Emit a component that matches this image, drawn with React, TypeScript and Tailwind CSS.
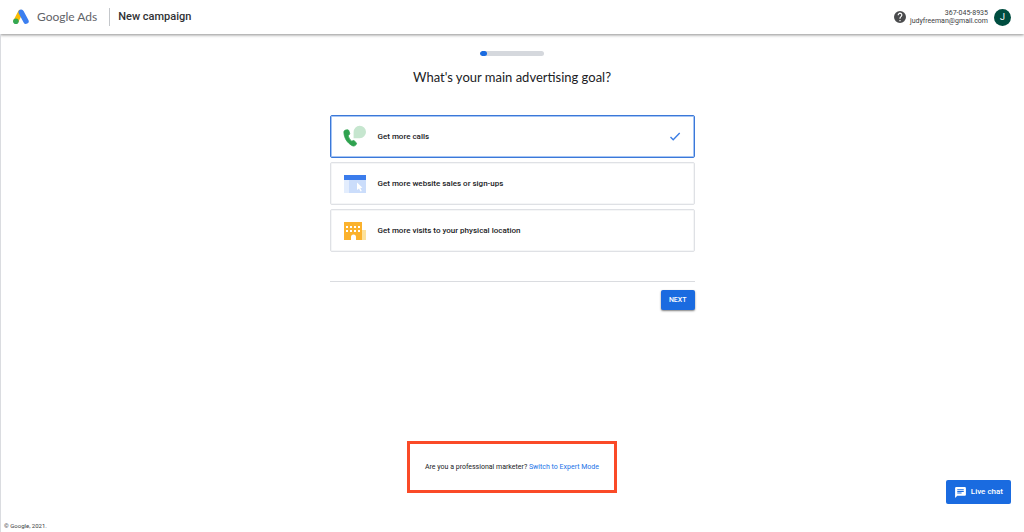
import { useState } from 'react';

const goals = [
  { id: 'calls', label: 'Get more calls', Icon: CallsIcon },
  { id: 'website', label: 'Get more website sales or sign-ups', Icon: WebsiteIcon },
  { id: 'visits', label: 'Get more visits to your physical location', Icon: StoreIcon },
];

function AdsLogo() {
  return (
    <svg className="h-4 w-4" viewBox="0 0 16 16" aria-hidden="true">
      <path d="M7.4 3.4 3 12" stroke="#fbbc04" strokeWidth="5" strokeLinecap="round" />
      <path d="M8.2 3.2 13 12.2" stroke="#3c7ff0" strokeWidth="5.4" strokeLinecap="round" />
      <circle cx="2.9" cy="12.3" r="2.8" fill="#34a853" />
    </svg>
  );
}

function CallsIcon() {
  return (
    <svg className="h-6 w-6" viewBox="0 0 24 24" aria-hidden="true">
      <path d="M10.6 13.2V7.200A6.200 6.200 0 1 1 16.800 13.200Z" fill="#c6e6cf" />
      <path
        d="M2.6 5.1 4.5 4.8c.6-.1 1.1.3 1.3.8l.9 2.7c.2.5 0 1-.4 1.3L5 10.7c.9 2.3 2 4.2 3.7 5.6l1.5-.7c.5-.2 1-.1 1.3.3l1.8 2.1c.4.5.3 1.1-.1 1.5l-1.200 1.100c-.6.5-1.400.6-2.200.3C4.400 18.400 1.100 13.200.9 7.200c0-1.100.6-1.900 1.700-2.100Z"
        fill="#2fa24f"
        stroke="#2fa24f"
        strokeWidth="0.8"
      />
    </svg>
  );
}

function WebsiteIcon() {
  return (
    <svg className="h-6 w-6" viewBox="0 0 24 24" aria-hidden="true">
      <path d="M1 3h22v18H1z" fill="#cbddfb" />
      <path d="M1 8h5v13H1z" fill="#e3edfd" />
      <path d="M1 3h22v5H1z" fill="#3b7cec" />
      <path d="m14 10.5 5.5 5.2-2.2.2 1.5 3-1.3.7-1.5-3.1-2 1.5z" fill="#fff" />
    </svg>
  );
}

function StoreIcon() {
  return (
    <svg className="h-6 w-6" viewBox="0 0 24 24" aria-hidden="true">
      <path d="M18 11h5v10h-5z" fill="#fde29b" />
      <path d="M1 3h18v18h-6v-3a2 2 0 0 0-5 0v3H1z" fill="#fbb22d" />
      <path
        d="M3 7h2v2H3zM7 7h2v2H7zM11 7h2v2h-2zM15 7h2v2h-2zM3 11h2v2H3zM7 11h2v2H7zM11 11h2v2h-2zM15 11h2v2h-2z"
        fill="#fff"
      />
    </svg>
  );
}

function Header() {
  return (
    <header className="flex h-[34px] items-center bg-white pr-[13px] pl-[13px] shadow-[0_1px_3px_rgba(0,0,0,0.45)]">
      <a href="#" className="flex items-center gap-2 font-['Lato',sans-serif] text-[12px] leading-4 text-[#5f6368]">
        <AdsLogo />
        <span>Google Ads</span>
      </a>
      <h1 className="ml-3 border-l border-[#c4c7cb] pl-2 text-[11px] leading-[18px] font-medium text-[#303134]">New campaign</h1>
      <button type="button" aria-label="Help" className="ml-auto">
        <svg className="h-3 w-3" viewBox="2 2 20 20" aria-hidden="true">
          <path
            d="M12 2a10 10 0 1 0 0 20 10 10 0 0 0 0-20Zm1 17h-2v-2h2v2Zm2.07-7.75-.9.92C13.45 12.9 13 13.5 13 15h-2v-.5c0-1.1.45-2.1 1.17-2.83l1.24-1.26A2 2 0 1 0 10 9H8a4 4 0 1 1 7.07 2.25Z"
            fill="#4a4b4d"
          />
        </svg>
      </button>
      <div className="ml-1 text-right text-[7px] leading-[8px] text-[#3c4043]">
        <div>367-045-8935</div>
        <div>judyfreeman@gmail.com</div>
      </div>
      <button type="button" aria-label="Account" className="ml-1.5 flex h-[17px] w-[17px] items-center justify-center rounded-full bg-[#004d40] text-[9px] leading-[17px] text-white">
        J
      </button>
    </header>
  );
}

export default function App() {
  const [goal, setGoal] = useState('calls');

  return (
    <div className="flex min-h-screen flex-col bg-white font-['Roboto',sans-serif] text-[#202124]">
      <Header />

      <main className="flex flex-1 flex-col items-center px-4 pt-[17px] shadow-[inset_1px_0_0_#dadce0]">
        <div role="progressbar" aria-label="Setup progress" aria-valuenow={10} className="h-[5px] w-16 overflow-hidden rounded-full bg-[#d5d8dd]">
          <div className="h-full w-[7px] rounded-full bg-[#1a6be0]" />
        </div>
        <h2 id="goal-title" className="mt-[11px] font-['Lato',sans-serif] text-[13px] leading-5">What's your main advertising goal?</h2>

        <form className="mt-7 w-full max-w-[365px]" onSubmit={(e) => e.preventDefault()}>
          <div role="radiogroup" aria-labelledby="goal-title" className="flex flex-col gap-1">
            {goals.map(({ id, label, Icon }) => (
              <label
                key={id}
                className="flex h-[43px] cursor-pointer items-center rounded-xs border border-[#dfe1e5] px-3 text-[8px] leading-3 font-medium shadow-[inset_0_0_0_1px_#f5f6f7] has-checked:border-[#3b78d8] has-checked:shadow-[inset_0_0_0_1px_#a5c5f5]"
              >
                <input type="radio" name="goal" value={id} checked={goal === id} onChange={() => setGoal(id)} className="peer w-0 appearance-none" />
                <Icon />
                <span className="ml-[11px] flex-1">{label}</span>
                <svg className="mr-px hidden h-3 w-3 peer-checked:block" viewBox="0 0 12 12" fill="none" aria-hidden="true">
                  <path d="m1.5 6 2.7 2.7 6.5-6.7" stroke="#3b7de4" strokeWidth="1.4" />
                </svg>
              </label>
            ))}
          </div>

          <div className="mt-[29px] flex justify-end border-t border-[#dadce0] pt-2">
            <button type="submit" className="h-5 rounded-xs bg-[#1a6be0] px-2 text-[7px] font-medium text-white shadow-[0_1px_2px_rgba(0,0,0,0.5)]">
              NEXT
            </button>
          </div>
        </form>

        <p className="mt-auto border-[3px] border-[#fa4a27] px-[15px] py-[17px] text-[7px] leading-3">
          Are you a professional marketer? <a href="#" className="text-[#1a73e8]">Switch to Expert Mode</a>
        </p>
      </main>

      <footer className="px-1 pt-7 pb-px text-[6px] leading-[10px] text-[#3c4043] shadow-[inset_1px_0_0_#dadce0]">© Google, 2021.</footer>

      <button type="button" className="fixed right-[13px] bottom-7 flex h-6 items-center gap-1 rounded-xs bg-[#1a6be0] px-2 text-[8px] font-medium text-white">
        <svg className="h-[13px] w-[13px]" viewBox="0 0 24 24" aria-hidden="true">
          <path d="M20 2H4a2 2 0 0 0-2 2v18l4-4h14a2 2 0 0 0 2-2V4a2 2 0 0 0-2-2ZM6 9h12v2H6V9Zm8 5H6v-2h8v2Zm4-6H6V6h12v2Z" fill="#fff" />
        </svg>
        Live chat
      </button>
    </div>
  );
}
